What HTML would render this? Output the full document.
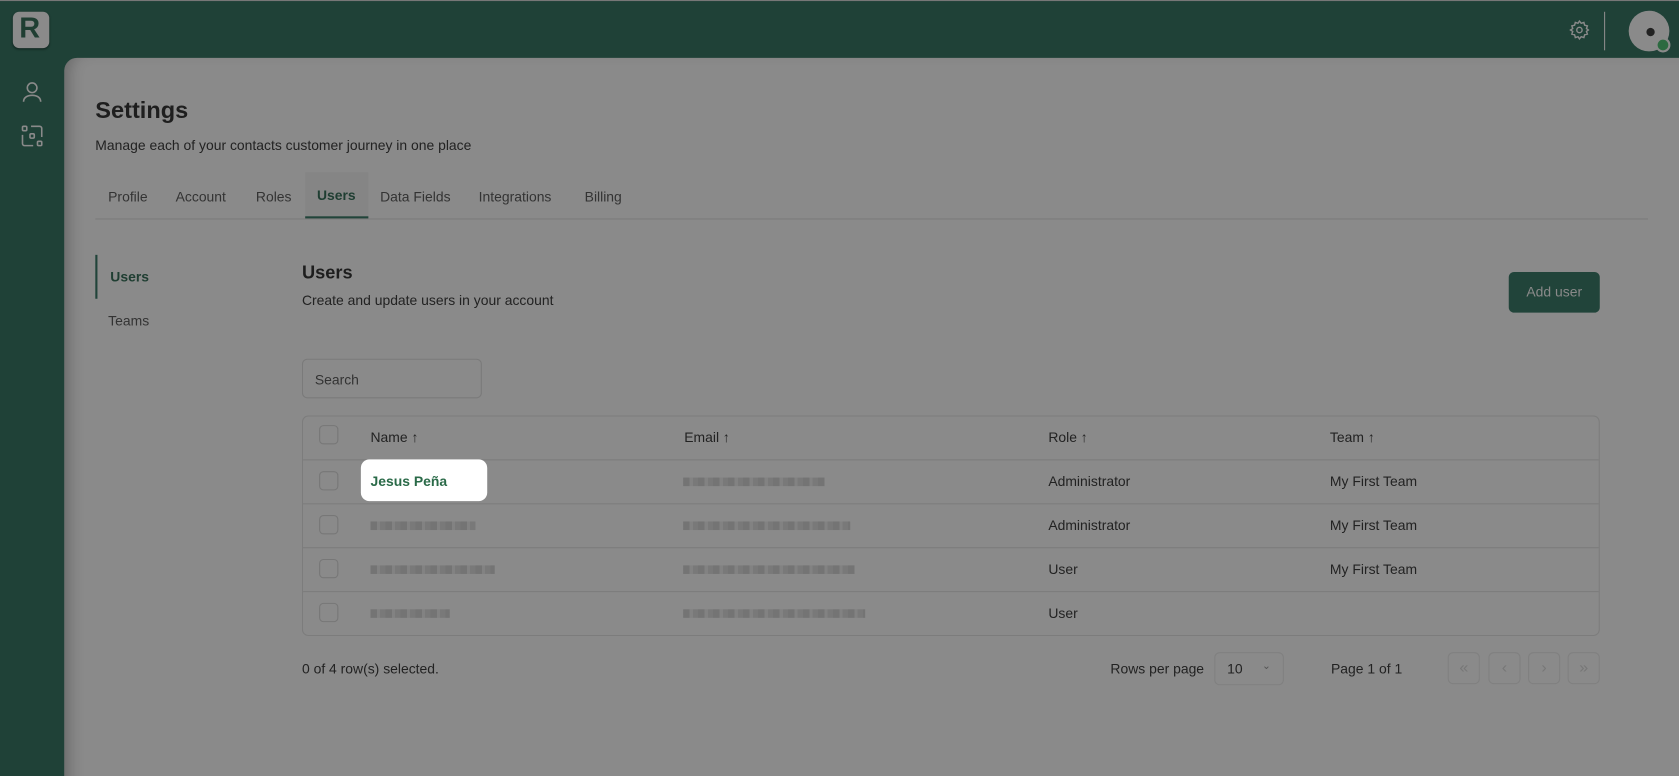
<!DOCTYPE html>
<html><head><meta charset="utf-8"><style>
*{box-sizing:border-box;margin:0;padding:0}
html,body{width:1679px;height:776px;overflow:hidden;background:#1f4137;font-family:"Liberation Sans",sans-serif}
#w{width:1568px;height:725px;transform:scale(1.0708);transform-origin:0 0;position:relative;background:#1f4137;border-top:1px solid #777}
.a{position:absolute}
#main{left:60px;top:53px;width:1508px;height:680px;background:#8a8a8a;border-radius:12px 0 0 0;box-shadow:inset 12px 0 14px -8px rgba(0,0,0,.25)}
.t{color:#1e1e1e;font-size:13px}
.m{color:#333;font-size:13px}
.blur{background:repeating-linear-gradient(90deg,#6e6e6e 0 6px,#808080 6px 9px,#757575 9px 14px);height:8px;opacity:.8}
.cb{width:18px;height:18px;border:1px solid #777;border-radius:4px}
.pb{width:30px;height:30px;border:1px solid #808080;border-radius:5px;color:#777;text-align:center;line-height:28px;font-size:15px}
</style></head><body><div id="w">
<div class="a" style="left:12px;top:10px;width:34px;height:34px;background:#8a8a8a;border-radius:6px;box-shadow:0 1px 2px rgba(0,0,0,.4)"></div>
<div class="a" style="left:18px;top:10px;font:bold 27px 'Liberation Sans',sans-serif;color:#1f3e32">R</div>
<svg class="a" style="left:19px;top:74px" width="22" height="22" viewBox="0 0 22 22" fill="none" stroke="#8a8a8a" stroke-width="1.5"><circle cx="11" cy="7" r="4.5"/><path d="M3 20c0-4 3.5-6 8-6s8 2 8 6"/></svg>
<svg class="a" style="left:20px;top:116px" width="20" height="20" viewBox="0 0 20 20" fill="none" stroke="#8a8a8a" stroke-width="1.5"><rect x="1" y="1" width="4" height="4" rx="1"/><rect x="15" y="15" width="4" height="4" rx="1"/><rect x="8" y="8" width="4" height="4" rx="1"/><path d="M9 1h8a2 2 0 0 1 2 2v8M1 9v8a2 2 0 0 0 2 2h8"/></svg>
<svg class="a" style="left:1465px;top:17px" width="20" height="20" viewBox="0 0 24 24" fill="none" stroke="#8a8a8a" stroke-width="1.6"><circle cx="12" cy="12" r="3"/><path d="M12 2l2 2.5 3-1 .8 3.1 3.1.8-1 3L22 12l-2.1 1.6 1 3-3.1.8-.8 3.1-3-1L12 22l-1.6-2.5-3 1-.8-3.1-3.1-.8 1-3L2 12l2.5-1.6-1-3 3.1-.8.8-3.1 3 1z"/></svg>
<div class="a" style="left:1498px;top:10px;width:1px;height:36px;background:#8a8a8a"></div>
<div class="a" style="left:1521px;top:9px;width:38px;height:38px;border-radius:50%;background:#8a8a8a"></div>
<div class="a" style="left:1536px;top:18px;font-size:18px;color:#222">●</div>
<div class="a" style="left:1546px;top:34px;width:14px;height:14px;border-radius:50%;background:#2c6a40;border:2px solid #8a8a8a"></div>
<div id="main" class="a"></div>
<div class="a t" style="left:89px;top:89px;font-size:22px;font-weight:bold">Settings</div>
<div class="a m" style="left:89px;top:127px;color:#222">Manage each of your contacts customer journey in one place</div>
<div class="a m" style="left:101px;top:175px">Profile</div>
<div class="a m" style="left:164px;top:175px">Account</div>
<div class="a m" style="left:239px;top:175px">Roles</div>
<div class="a" style="left:285px;top:160px;width:59px;height:43px;background:#858585;border-bottom:2px solid #21443a"></div>
<div class="a" style="left:296px;top:174px;font-size:13px;font-weight:bold;color:#1f3e32">Users</div>
<div class="a m" style="left:355px;top:175px">Data Fields</div>
<div class="a m" style="left:447px;top:175px">Integrations</div>
<div class="a m" style="left:546px;top:175px">Billing</div>
<div class="a" style="left:89px;top:203px;width:1450px;height:1px;background:#7a7a7a"></div>
<div class="a" style="left:89px;top:237px;width:2px;height:41px;background:#21443a"></div>
<div class="a" style="left:103px;top:250px;font-size:13px;font-weight:bold;color:#1f3e32">Users</div>
<div class="a m" style="left:101px;top:291px">Teams</div>
<div class="a t" style="left:282px;top:244px;font-size:17px;font-weight:bold">Users</div>
<div class="a m" style="left:282px;top:272px;color:#222">Create and update users in your account</div>
<div class="a" style="left:1409px;top:253px;width:85px;height:38px;background:#21443a;border-radius:5px;color:#8a8a8a;font-size:13px;text-align:center;line-height:38px">Add user</div>
<div class="a" style="left:282px;top:334px;width:168px;height:37px;border:1px solid #7a7a7a;border-radius:5px;padding:11px;font-size:13px;color:#333">Search</div>
<div class="a" style="left:282px;top:387px;width:1212px;height:206px;border:1px solid #7c7c7c;border-radius:6px"></div>
<div class="a" style="left:283px;top:428px;width:1210px;height:1px;background:#7c7c7c"></div>
<div class="a" style="left:283px;top:469px;width:1210px;height:1px;background:#7c7c7c"></div>
<div class="a" style="left:283px;top:510px;width:1210px;height:1px;background:#7c7c7c"></div>
<div class="a" style="left:283px;top:551px;width:1210px;height:1px;background:#7c7c7c"></div>
<div class="a cb" style="left:298px;top:396px"></div>
<div class="a cb" style="left:298px;top:439px"></div>
<div class="a cb" style="left:298px;top:480px"></div>
<div class="a cb" style="left:298px;top:521px"></div>
<div class="a cb" style="left:298px;top:562px"></div>
<div class="a m" style="left:346px;top:400px;color:#222">Name ↑</div>
<div class="a m" style="left:639px;top:400px;color:#222">Email ↑</div>
<div class="a m" style="left:979px;top:400px;color:#222">Role ↑</div>
<div class="a m" style="left:1242px;top:400px;color:#222">Team ↑</div>
<div class="a" style="left:337px;top:428px;width:118px;height:39px;background:#fff;border-radius:8px"></div>
<div class="a" style="left:346px;top:441px;font-size:13px;font-weight:bold;color:#2a6a48">Jesus Peña</div>
<div class="a blur" style="left:638px;top:445px;width:132px"></div>
<div class="a blur" style="left:346px;top:486px;width:98px"></div><div class="a blur" style="left:638px;top:486px;width:156px"></div>
<div class="a blur" style="left:346px;top:527px;width:116px"></div><div class="a blur" style="left:638px;top:527px;width:160px"></div>
<div class="a blur" style="left:346px;top:568px;width:74px"></div><div class="a blur" style="left:638px;top:568px;width:170px"></div>
<div class="a m" style="left:979px;top:441px;color:#222">Administrator</div>
<div class="a m" style="left:979px;top:482px;color:#222">Administrator</div>
<div class="a m" style="left:979px;top:523px;color:#222">User</div>
<div class="a m" style="left:979px;top:564px;color:#222">User</div>
<div class="a m" style="left:1242px;top:441px;color:#222">My First Team</div>
<div class="a m" style="left:1242px;top:482px;color:#222">My First Team</div>
<div class="a m" style="left:1242px;top:523px;color:#222">My First Team</div>
<div class="a m" style="left:282px;top:616px;color:#222">0 of 4 row(s) selected.</div>
<div class="a m" style="left:1037px;top:616px;color:#222">Rows per page</div>
<div class="a" style="left:1134px;top:608px;width:65px;height:31px;border:1px solid #808080;border-radius:5px;font-size:13px;color:#222;padding:7px 11px">10 <span style="float:right;color:#555;font-size:10px">⌄</span></div>
<div class="a m" style="left:1243px;top:616px;color:#222">Page 1 of 1</div>
<div class="a pb" style="left:1352px;top:608px">«</div>
<div class="a pb" style="left:1390px;top:608px">‹</div>
<div class="a pb" style="left:1427px;top:608px">›</div>
<div class="a pb" style="left:1464px;top:608px">»</div>
</div></body></html>
